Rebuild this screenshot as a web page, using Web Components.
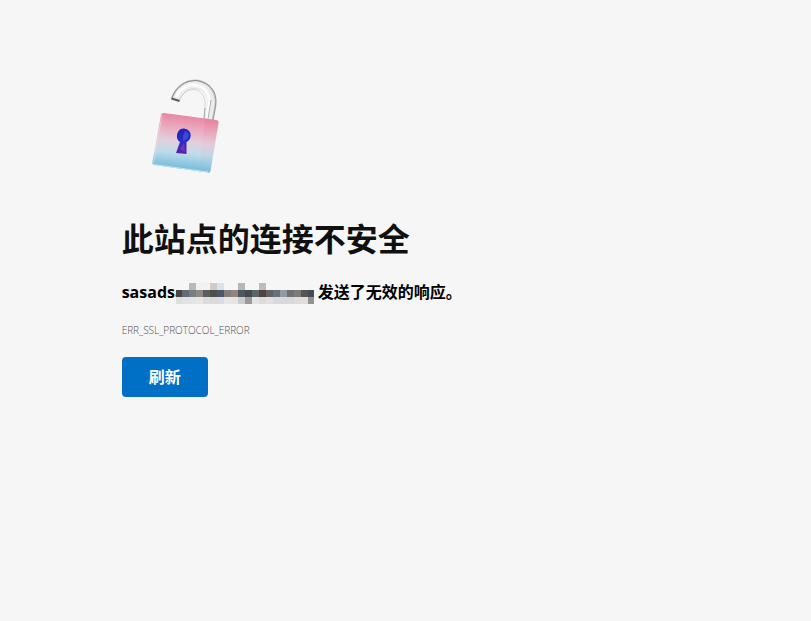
<!DOCTYPE html>
<html lang="zh-CN">
<head>
<meta charset="utf-8">
<meta name="viewport" content="width=device-width, initial-scale=1">
<title>此站点的连接不安全</title>
<style>
    body {
        margin: 0;
        background: #f6f6f6;
        color: #101010;
        font-family: "Open Sans", "Noto Sans CJK SC", sans-serif;
    }
</style>
</head>
<body>

<error-page>
    <lock-picture slot="picture"></lock-picture>
    <span slot="title">此站点的连接不安全</span>
    <masked-host slot="host">sasadsa</masked-host>
    <span slot="reason">发送了无效的响应。</span>
    <span slot="code">ERR_SSL_PROTOCOL_ERROR</span>
    <reload-button slot="action">刷新</reload-button>
</error-page>

<template id="error-page">
    <style>
        :host {
            display: block;
            padding: 72px 15%;
        }
        main {
            display: flex;
            flex-direction: column;
            align-items: flex-start;
        }
        h1 {
            margin: 37px 0 0;
            font-size: 32px;
            line-height: 44px;
            font-weight: 700;
        }
        p {
            margin: 0;
        }
        .message {
            margin-top: 19px;
            color: #000;
            font-size: 16px;
            line-height: 24px;
            font-weight: 700;
        }
        .code {
            margin: 18px 0 19px;
            color: #505050;
            font-size: 10px;
            line-height: 16px;
            font-weight: 300;
        }
    </style>
    <main>
        <slot name="picture"></slot>
        <h1><slot name="title"></slot></h1>
        <p class="message"><slot name="host"></slot> <slot name="reason"></slot></p>
        <p class="code"><slot name="code"></slot></p>
        <slot name="action"></slot>
    </main>
</template>

<template id="lock-picture">
    <style>
        :host {
            display: block;
        }
        svg {
            display: block;
        }
    </style>
    <svg width="128" height="108" viewBox="0 0 128 108" aria-hidden="true">
        <defs>
            <linearGradient id="body" x1="0.56" y1="0" x2="0.44" y2="1">
                <stop offset="0" stop-color="#e87f9e"/>
                <stop offset="0.22" stop-color="#eba3b8"/>
                <stop offset="0.48" stop-color="#e3cfdd"/>
                <stop offset="0.68" stop-color="#bddcea"/>
                <stop offset="1" stop-color="#62b3d8"/>
            </linearGradient>
            <linearGradient id="side" x1="0" y1="0" x2="0" y2="1">
                <stop offset="0" stop-color="#e0587c"/>
                <stop offset="0.5" stop-color="#e5bccd"/>
                <stop offset="1" stop-color="#87c5e0"/>
            </linearGradient>
            <linearGradient id="hole" x1="0" y1="0" x2="0" y2="1">
                <stop offset="0" stop-color="#1b22bd"/>
                <stop offset="0.55" stop-color="#332bc4"/>
                <stop offset="1" stop-color="#5c239e"/>
            </linearGradient>
        </defs>
        <!-- shackle -->
        <g fill="none">
            <path d="M53 28 C57 17 66 11 75 12 C86 14 91 23 90 33 L87 48" stroke="#c9c8c8" stroke-width="9"/>
            <path d="M53.500 28.500 C58 17 66 12 75 13 C85 15 90 23 89 33 L86 48" stroke="#ececec" stroke-width="7"/>
            <path d="M50 26 C54 14 64 8 75 8.500 C83 10 89 14 92 20" stroke="#8c8c8c" stroke-width="1"/>
            <path d="M54 25 C59 16 66 12 74 13 C84 15 88 23 87 33 L85 47" stroke="#fcfcfc" stroke-width="3"/>
            <path d="M57 29 C60 21 66 17 73 17.500 C80 19 84 26 83 34 L82 47" stroke="#dcd2d5" stroke-width="1"/>
            <path d="M92 20 C95 27 94 32 91 48" stroke="#999" stroke-width="1"/>
            <path d="M89 28 L86 47" stroke="#b0b0b0" stroke-width="1"/>
            <path d="M83 36 L82 47" stroke="#a8a8a8" stroke-width="1"/>
            <path d="M49.500 26.500 L57.500 29" stroke="#5a5a5a" stroke-width="2"/>
        </g>
        <!-- body -->
        <path d="M42 41 L94 48 Q97 48.500 96.500 51 L88.500 99 Q88 101 86 100.600 L32 93 Q30 92.500 30.300 90 L39 43 Q39.500 40.700 42 41Z" fill="url(#body)"/>
        <path d="M83 46.500 L94 48 Q97 48.500 96.500 51 L88.500 99 Q88 101 86 100.600 L77 99.300Z" fill="url(#side)" opacity=".2"/>
        <path d="M40 43 L31.500 91" stroke="#f6dce5" stroke-width="1" opacity=".6"/>
        <path d="M32 92.500 L86 100" stroke="#c5e3ef" stroke-width="1"/>
        <!-- keyhole -->
        <path d="M62 56.500 C67 57.200 69.500 61 68.500 65 C68 67.500 66.500 69 64.500 70 L64.500 82 L54 81 L58 70 C55.500 68.500 54.500 66 55 63 C55.600 59 58.500 56 62 56.500Z" fill="url(#hole)"/>
        <path d="M63 59 C67 60 68 64 65 67 L61 69 L61 64Z" fill="#485eea" opacity=".6"/>
        <path d="M58 77 L62 71 L63 80Z" fill="#8438bd" opacity=".7"/>
    </svg>
</template>

<template id="masked-host">
    <style>
        :host {
            display: inline-flex;
            align-items: flex-end;
            vertical-align: top;
        }
        svg {
            /* the mosaic covers the end of the name */
            margin-left: -9px;
        }
    </style>
    <slot></slot>
    <svg width="138" height="21" viewBox="0 0 138 21" shape-rendering="crispEdges" aria-hidden="true"></svg>
</template>

<template id="reload-button">
    <style>
        :host {
            display: block;
        }
        button {
            padding: 8px 27px;
            border: none;
            border-radius: 4px;
            background: #0070c6;
            color: #fff;
            font: inherit;
            font-size: 16px;
            line-height: 24px;
            font-weight: 700;
            cursor: pointer;
        }
        button:hover {
            background: #0063b1;
        }
    </style>
    <button type="button"><slot></slot></button>
</template>

<script>
function render(element) {
    const template = document.getElementById(element.localName);
    const root = element.attachShadow({mode: 'open'});
    root.appendChild(template.content.cloneNode(true));
    return root;
}

customElements.define('error-page', class ErrorPage extends HTMLElement {
    constructor() {
        super();
        render(this);
    }
});

customElements.define('lock-picture', class LockPicture extends HTMLElement {
    constructor() {
        super();
        render(this);
    }
});

customElements.define('masked-host', class MaskedHost extends HTMLElement {

    // one colour per tile, 20 tiles in a row
    static rows = [
        '#f6f6f6 #f6f6f6 #b9b9b9 #f1f1f1 #f3f1f1 #ceccc5 #dce2e9 #f6f6f6 #f6f6f6 #b5b8bb #f6f6f6 #f6f6f6 #bcbcbc #f6f6f6 #f6f6f6 #f6f6f6 #f6f6f6 #f6f6f6 #f6f6f6 #f6f6f6',
        '#49443d #626a73 #747e83 #8e8985 #5d5c60 #4d504d #46586a #827c7d #958578 #4b5965 #424b52 #5a6769 #51443f #625f66 #66727b #9299a2 #6e7071 #817977 #595351 #454c54',
        '#dededb #e2e2e2 #e5e4e4 #e7e5e5 #dddddf #dadada #d9dce0 #e8e7e7 #e5e4e1 #cccbcd #9d9996 #e4e4e4 #dddcdc #e1e1e3 #d8dadb #d7d9dc #d9d9dc #dedddc #dedede #93908e'
    ];

    constructor() {
        super();
        this.svg = render(this).querySelector('svg');
    }

    connectedCallback() {
        const size = 7;
        this.svg.innerHTML = MaskedHost.rows.map((row, y) =>
            row.split(' ').map((color, x) =>
                `<rect x="${x * size - 1}" y="${y * size}" width="${size}" height="${size}" fill="${color}"/>`
            ).join('')
        ).join('');
    }
});

customElements.define('reload-button', class ReloadButton extends HTMLElement {

    constructor() {
        super();
        this.button = render(this).querySelector('button');
        this.reload = this.reload.bind(this);
    }

    connectedCallback() {
        this.button.addEventListener('click', this.reload);
    }

    disconnectedCallback() {
        this.button.removeEventListener('click', this.reload);
    }

    reload() {
        location.reload();
    }
});
</script>
</body>
</html>
